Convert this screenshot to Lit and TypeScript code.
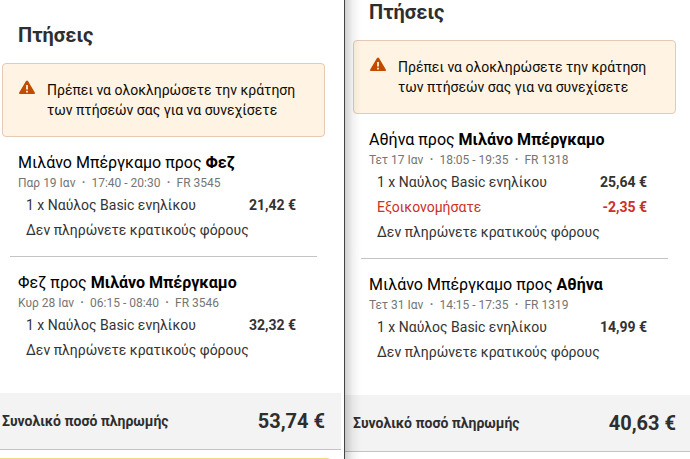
import { LitElement, html, css, nothing } from "lit";
import { customElement, property } from "lit/decorators.js";

interface Flight {
  from: string;
  to: string;
  date: string;
  times: string;
  code: string;
  fare: string;
  saving?: string;
}

const fez: Flight[] = [
  { from: "Μιλάνο Μπέργκαμο", to: "Φεζ", date: "Παρ 19 Ιαν", times: "17:40 - 20:30", code: "FR 3545", fare: "21,42 €" },
  { from: "Φεζ", to: "Μιλάνο Μπέργκαμο", date: "Κυρ 28 Ιαν", times: "06:15 - 08:40", code: "FR 3546", fare: "32,32 €" },
];

const athens: Flight[] = [
  { from: "Αθήνα", to: "Μιλάνο Μπέργκαμο", date: "Τετ 17 Ιαν", times: "18:05 - 19:35", code: "FR 1318", fare: "25,64 €", saving: "-2,35 €" },
  { from: "Μιλάνο Μπέργκαμο", to: "Αθήνα", date: "Τετ 31 Ιαν", times: "14:15 - 17:35", code: "FR 1319", fare: "14,99 €" },
];

@customElement("price-summary")
export class PriceSummary extends LitElement {
  @property({ attribute: false }) flights: Flight[] = [];
  @property() total = "";

  static styles = css`
    :host { display: block; }
    * { box-sizing: border-box; }
    h2, h3, p, dl, dt, dd { margin: 0; }
    .body, .footer { padding: 0 var(--end, 16px) 0 var(--start, 2px); }
    .heading {
      padding-left: 16px;
      font-size: 20px;
      line-height: 24px;
      font-weight: 700;
      color: #2e2e2e;
    }
    .alert {
      display: flex;
      gap: 12px;
      margin-top: 16px;
      padding: 16px;
      border: 1px solid #e6c9b3;
      border-radius: 4px;
      background: #fff4e3;
      color: #0f0a05;
      font-size: 14px;
      line-height: 20px;
    }
    .icon { flex: none; width: 16px; height: 16px; }
    .flight { margin-top: 16px; padding: 0 29px 0 16px; }
    .flight + .flight::before {
      content: "";
      display: block;
      height: 1px;
      margin: -3px -21px 16px -8px;
      background: #c4c4c4;
    }
    .route { font-size: 16px; line-height: 20px; font-weight: 400; color: #000; white-space: nowrap; }
    .meta { display: flex; font-size: 12px; line-height: 20px; color: #757575; }
    .dot { width: 16px; text-align: center; font-weight: 700; }
    .rows { padding-left: 8px; font-size: 14px; line-height: 25px; color: #333; }
    .row { display: flex; justify-content: space-between; }
    .amount { font-weight: 700; }
    .saving { color: #cc3027; }
    .footer {
      display: flex;
      justify-content: space-between;
      align-items: center;
      height: 57px;
      margin-top: 30px;
      border-bottom: 1px solid #c1c3c7;
      background: #f3f3f3;
      color: #2e2e2e;
      font-weight: 700;
    }
    .label { font-size: 14px; }
    .total { font-size: 20px; }
  `;

  render() {
    return html`
      <div class="body">
        <h2 class="heading">Πτήσεις</h2>
        <div class="alert" role="status">
          <svg class="icon" viewBox="0 0 16 16" aria-hidden="true">
            <path fill="#c24b00" fill-rule="evenodd" d="M7 1.1Q8 -.1 9 1.1L15.8 12.6Q16.4 14 15.1 14H.9Q-.4 14 .2 12.6ZM7.1 4.9V9.6H8.9V4.9ZM7.1 10.8V12.5H8.9V10.8Z"></path>
          </svg>
          <p>Πρέπει να ολοκληρώσετε την κράτηση των πτήσεών σας για να συνεχίσετε</p>
        </div>
        ${this.flights.map((f) => html`
          <section class="flight">
            <h3 class="route">${f.from} προς <b>${f.to}</b></h3>
            <p class="meta">
              <span>${f.date}</span><span class="dot">·</span><span>${f.times}</span><span class="dot">·</span><span>${f.code}</span>
            </p>
            <dl class="rows">
              <div class="row"><dt>1 x Ναύλος Basic ενηλίκου</dt><dd class="amount">${f.fare}</dd></div>
              ${f.saving
                ? html`<div class="row saving"><dt>Εξοικονομήσατε</dt><dd class="amount">${f.saving}</dd></div>`
                : nothing}
              <div class="row"><dt>Δεν πληρώνετε κρατικούς φόρους</dt></div>
            </dl>
          </section>`)}
      </div>
      <div class="footer">
        <span class="label">Συνολικό ποσό πληρωμής</span>
        <span class="total">${this.total}</span>
      </div>
    `;
  }
}

@customElement("app-root")
export class AppRoot extends LitElement {
  static styles = css`
    :host {
      display: grid;
      grid-template-columns: 1fr 1fr;
      height: 100vh;
      overflow: hidden;
      background: #fff;
      font-family: Roboto, "Noto Sans", sans-serif;
    }
    .panel { min-width: 0; overflow: hidden; }
    .left { padding: 23px 3px 0 0; border-right: 1px solid #444; }
    .right { position: relative; --start: 8px; --end: 14px; }
    /* shadow cast by the left panel */
    .right::after {
      content: "";
      position: absolute;
      inset: 0 auto 0 0;
      width: 16px;
      background: linear-gradient(to right, rgba(0, 0, 0, 0.18), rgba(0, 0, 0, 0.05) 50%, transparent);
    }
    .notice {
      height: 40px;
      margin: 8px 10px 0 0;
      border-top: 1px solid #eedc82;
      border-radius: 0 4px 0 0;
      background: #fffbe6;
    }
  `;

  render() {
    return html`
      <div class="panel left">
        <price-summary .flights=${fez} total="53,74 €"></price-summary>
        <div class="notice"></div>
      </div>
      <div class="panel right">
        <price-summary .flights=${athens} total="40,63 €"></price-summary>
      </div>
    `;
  }
}
